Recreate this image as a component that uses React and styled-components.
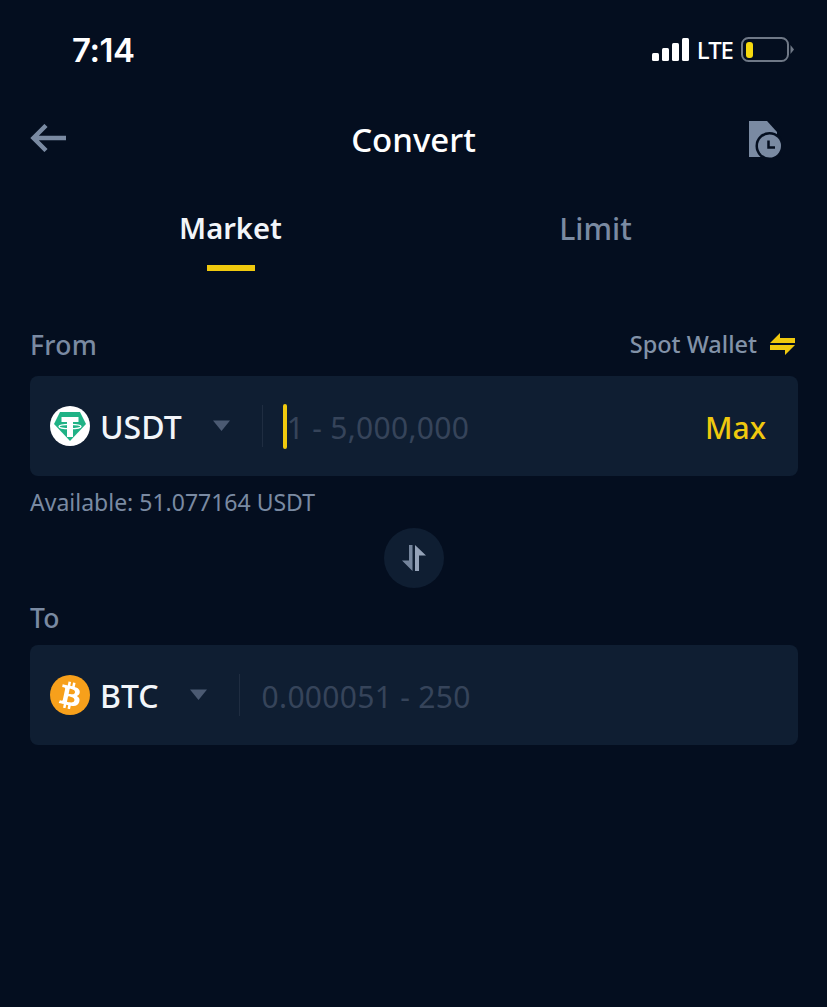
import React from "react";
import styled, { createGlobalStyle } from "styled-components";
import { FaBtc } from "react-icons/fa";

const Global = createGlobalStyle`
  html, body { margin: 0; padding: 0; background: #040e1f; }
  * { box-sizing: border-box; }
`;

const Page = styled.div`
  width: 827px; height: 1007px; background: #040e1f; overflow: hidden;
  font-family: "Noto Sans", sans-serif; color: #fff;
`;
const StatusBar = styled.div`
  height: 100px; padding: 0 33px 0 72px; display: flex; align-items: center; justify-content: space-between;
`;
const Time = styled.div`font-size: 33px; font-weight: 600; line-height: 1; font-family: Inter, sans-serif; letter-spacing: -0.5px;`;
const StatusRight = styled.div`display: flex; align-items: center; gap: 8px;`;
const Lte = styled.span`font-size: 24px; line-height: 1; letter-spacing: -1px; font-weight: 500;`;
const Nav = styled.div`
  height: 76px; padding: 0 45px 0 30px; display: flex; align-items: center; justify-content: space-between; position: relative;
`;
const NavTitle = styled.div`
  position: absolute; left: 0; right: 0; text-align: center; top: 20px; font-size: 33px; line-height: 40px; font-weight: 500;
`;
const Tabs = styled.div`
  display: grid; grid-template-columns: 365px 365px; padding: 0 48px; margin-top: 14px; height: 82px;
`;
const Tab = styled.div`
  display: flex; flex-direction: column; align-items: center; padding-top: ${p => p.$active ? 18 : 19}px;
  font-size: ${p => p.$active ? 29.200 : 30.200}px; line-height: 40px; font-weight: ${p => p.$active ? 600 : 500};
  color: ${p => p.$active ? "#f2f5f9" : "#7a8aa2"};
`;
const Underline = styled.div`width: 48px; height: 6px; background: #f0c90e; margin-top: 17px;`;
const Form = styled.div`padding: 0 29px 0 30px;`;
const LabelRow = styled.div`
  display: flex; align-items: center; justify-content: space-between; height: 40px; margin-top: ${p => p.$top}px;
`;
const Label = styled.div`font-size: 26.500px; line-height: 40px; color: #7a8aa2; font-weight: 500; letter-spacing: 0.3px;`;
const Wallet = styled.div`
  display: flex; align-items: center; gap: 13px; font-size: 23.500px; font-weight: 500; color: #8292a8;
  padding-right: 3px; margin-top: -3px;
`;
const Panel = styled.div`
  height: 100px; border-radius: 8px; background: #0f1e32; margin-top: ${p => p.$top}px;
  display: flex; align-items: center; padding: 0 32px 0 20px;
`;
const CoinIcon = styled.svg`width: 40px; height: 40px; flex: none;`;
const BtcBadge = styled.div`
  width: 40px; height: 40px; border-radius: 50%; background: #f7a01b; color: #fff; flex: none;
  display: flex; align-items: center; justify-content: center; font-size: 27px;
  svg { transform: rotate(12deg); }
`;
const Coin = styled.div`font-size: 32px; font-weight: 500; color: #f2f5f9; margin: 1px 0 0 10px; line-height: 1;`;
const Caret = styled.svg`width: 17px; height: 11px; flex: none; margin-left: ${p => p.$left}px; margin-top: -1px;`;
const Divider = styled.div`width: 1px; height: 42px; background: #1f2d41; flex: none; margin-left: 32px;`;
const Cursor = styled.div`width: 4px; height: 45px; border-radius: 2px; background: #f0c90e; flex: none; margin-left: 20px;`;
const Placeholder = styled.div`
  font-size: 30px; color: #36445a; line-height: 1; margin: 3px 0 0 ${p => p.$left}px; flex: 1; letter-spacing: 0.3px;
`;
const Max = styled.div`font-size: 30px; font-weight: 500; color: #f0c90e; line-height: 1; margin-top: 3px;`;
const Available = styled.div`font-size: 23px; line-height: 30px; color: #7a8aa2; margin-top: 11px;`;
const SwapRow = styled.div`display: flex; justify-content: center; padding-right: 1px; margin-top: 11px;`;
const SwapButton = styled.div`
  width: 60px; height: 60px; border-radius: 50%; background: #0f1e32; display: flex; align-items: center; justify-content: center;
`;
const HistoryWrap = styled.div`display: flex; margin-top: 3px;`;

const Signal = () => (
  <svg width="37" height="24" viewBox="0 0 37 24">
    <rect x="0" y="15" width="7" height="8" rx="1.5" fill="#fff" />
    <rect x="10" y="10" width="7" height="13" rx="1.5" fill="#fff" />
    <rect x="20" y="5" width="7" height="18" rx="1.5" fill="#fff" />
    <rect x="30" y="0" width="7" height="23" rx="1.5" fill="#fff" />
  </svg>
);
const Battery = () => (
  <svg width="53" height="26" viewBox="0 0 53 26">
    <rect x="1" y="1" width="46" height="23" rx="6.5" fill="none" stroke="#6f7886" strokeWidth="2" />
    <rect x="5" y="5" width="7" height="16" rx="3" fill="#f6d90f" />
    <path d="M49.500 8 L53 12.500 L49.500 17 Z" fill="#6f7886" />
  </svg>
);
const BackArrow = () => (
  <svg width="37" height="28" viewBox="0 0 37 28">
    <path d="M36 14 H5 M16 1.500 L3.500 14 L16 26.500" fill="none" stroke="#7a8aa2" strokeWidth="4.500" />
  </svg>
);
const HistoryIcon = () => (
  <svg width="33" height="37" viewBox="0 0 33 37">
    <path d="M0 0 H18 L28 11 V36 H0 Z" fill="#7a8aa2" />
    <circle cx="20.500" cy="25" r="14" fill="#040e1f" />
    <circle cx="20.500" cy="25" r="11.500" fill="#7a8aa2" />
    <path d="M19.500 19.500 V26.500 H26" fill="none" stroke="#040e1f" strokeWidth="2.500" />
  </svg>
);
const WalletIcon = () => (
  <svg width="25" height="22" viewBox="0 0 25 22">
    <path d="M10 0 L0 10 H25 V5 H10 Z" fill="#f0c90e" />
    <path d="M0 12 H25 L15 22 V17 H0 Z" fill="#f0c90e" />
  </svg>
);
const CaretIcon = ({ left }) => (
  <Caret $left={left} viewBox="0 0 17 11">
    <path d="M0 0.500 H17 L8.500 11 Z" fill="#4b5a72" />
  </Caret>
);
const Usdt = () => (
  <CoinIcon viewBox="0 0 40 40">
    <circle cx="20" cy="20" r="20" fill="#fff" />
    <path d="M10 6 H30 L36 18 L20 35 L4 18 Z" fill="#1fb285" />
    <rect x="11.500" y="11" width="17" height="5" fill="#fff" />
    <rect x="17" y="11" width="6" height="20" fill="#fff" />
    <ellipse cx="20" cy="20.500" rx="11" ry="2.200" fill="none" stroke="#fff" strokeWidth="1.300" />
  </CoinIcon>
);
const SwapIcon = () => (
  <svg width="24" height="26" viewBox="0 0 24 26">
    <path d="M7 0 H10.500 V26 L0 15.500 H7 Z" fill="#75859c" />
    <path d="M13 0 L24 10.500 H17 V26 H13 Z" fill="#95a3b8" />
  </svg>
);

export default function App() {
  return (
    <Page>
      <Global />
      <StatusBar>
        <Time>7:14</Time>
        <StatusRight>
          <Signal />
          <Lte>LTE</Lte>
          <Battery />
        </StatusRight>
      </StatusBar>
      <Nav>
        <BackArrow />
        <NavTitle>Convert</NavTitle>
        <HistoryWrap><HistoryIcon /></HistoryWrap>
      </Nav>
      <Tabs>
        <Tab $active>
          Market
          <Underline />
        </Tab>
        <Tab>Limit</Tab>
      </Tabs>
      <Form>
        <LabelRow $top={53}>
          <Label>From</Label>
          <Wallet>Spot Wallet <WalletIcon /></Wallet>
        </LabelRow>
        <Panel $top={11}>
          <Usdt />
          <Coin>USDT</Coin>
          <CaretIcon left={31} />
          <Divider />
          <Cursor />
          <Placeholder $left={0}>1 - 5,000,000</Placeholder>
          <Max>Max</Max>
        </Panel>
        <Available>Available: 51.077164 USDT</Available>
        <SwapRow>
          <SwapButton><SwapIcon /></SwapButton>
        </SwapRow>
        <LabelRow $top={10}>
          <Label>To</Label>
        </LabelRow>
        <Panel $top={7}>
          <BtcBadge><FaBtc /></BtcBadge>
          <Coin>BTC</Coin>
          <CaretIcon left={31} />
          <Divider />
          <Placeholder $left={22}>0.000051 - 250</Placeholder>
        </Panel>
      </Form>
    </Page>
  );
}
